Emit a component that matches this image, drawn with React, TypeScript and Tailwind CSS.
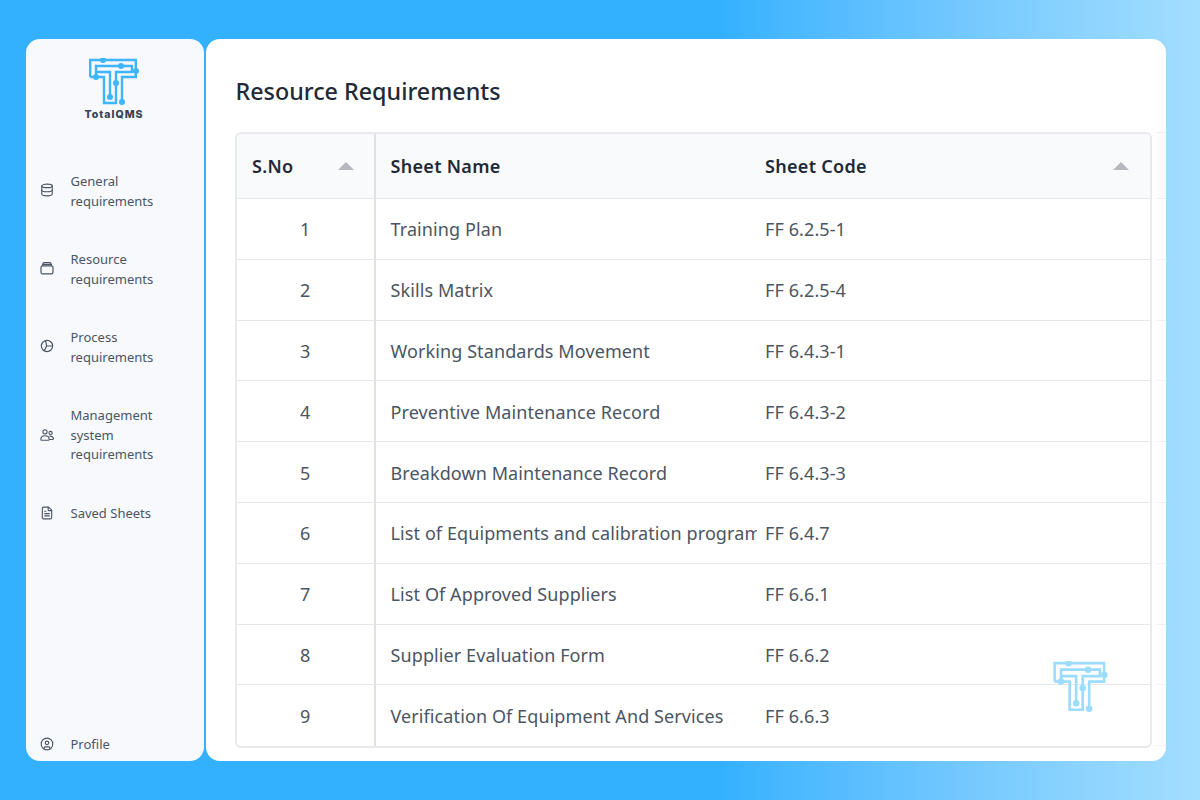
import { Database, FileText, CircleUser } from 'lucide-react';

const rows = [
  ['1', 'Training Plan', 'FF 6.2.5-1'],
  ['2', 'Skills Matrix', 'FF 6.2.5-4'],
  ['3', 'Working Standards Movement', 'FF 6.4.3-1'],
  ['4', 'Preventive Maintenance Record', 'FF 6.4.3-2'],
  ['5', 'Breakdown Maintenance Record', 'FF 6.4.3-3'],
  ['6', 'List of Equipments and calibration program', 'FF 6.4.7'],
  ['7', 'List Of Approved Suppliers', 'FF 6.6.1'],
  ['8', 'Supplier Evaluation Form', 'FF 6.6.2'],
  ['9', 'Verification Of Equipment And Services', 'FF 6.6.3'],
];

function Logo({ className }: { className: string }) {
  return (
    <svg viewBox="0 0 50 48" fill="none" stroke="currentColor" strokeWidth="2.4" className={className}>
      <path d="M1.2 19V2h45.6v17H33v26" />
      <path d="M1.2 19H15v26h12V26" />
      <path d="M7 19V8h36v6H27v12" />
      <path d="M21 38V14H7" />
      <g fill="currentColor" stroke="none">
        <circle cx="14" cy="2" r="3" />
        <circle cx="32" cy="8" r="3" />
        <circle cx="47" cy="13" r="3" />
        <circle cx="7" cy="19" r="3" />
        <circle cx="27" cy="25" r="3" />
        <circle cx="21" cy="39" r="3" />
        <circle cx="33" cy="44" r="3" />
      </g>
    </svg>
  );
}

function BoxIcon() {
  return (
    <svg viewBox="0 0 14 14" fill="none" stroke="currentColor" strokeWidth="1.2" className="h-[14px] w-[14px]">
      <rect x="1" y="4.8" width="12" height="8" rx="1.6" />
      <path d="M2.3 4.8 3 2.6C3.2 2 3.6 1.6 4.3 1.6h5.4c.7 0 1.1.4 1.3 1l.7 2.2" />
      <path d="M3 3.4h8" />
    </svg>
  );
}

function GaugeIcon() {
  return (
    <svg viewBox="0 0 14 14" fill="none" stroke="currentColor" strokeWidth="1.2" className="h-[14px] w-[14px]">
      <circle cx="7" cy="7" r="5.6" />
      <path d="M5.6 1.6 6.6 7l-2.4 4.8M6.6 7h6" />
    </svg>
  );
}

function PeopleIcon() {
  return (
    <svg viewBox="0 0 14 14" fill="none" stroke="currentColor" strokeWidth="1.1" className="h-[14px] w-[14px]">
      <circle cx="5" cy="3.8" r="2.1" />
      <circle cx="10.6" cy="5" r="1.6" />
      <path d="M.8 11.4c0-2.2 1.8-3.6 4.2-3.6s4.2 1.4 4.2 3.6c0 .5-.4.8-.9.8H1.7c-.5 0-.9-.3-.9-.8Z" />
      <path d="M9.4 8.2c2.2-.3 4 .8 4 2.5 0 .5-.4.8-.9.8H9.4" />
    </svg>
  );
}

const navItems = [
  { icon: <Database className="h-[14px] w-[14px]" strokeWidth={1.9} />, lines: ['General', 'requirements'], iconClass: 'mb-[3px]' },
  { icon: <BoxIcon />, lines: ['Resource', 'requirements'], iconClass: 'mb-[3px]' },
  { icon: <GaugeIcon />, lines: ['Process', 'requirements'], iconClass: 'mb-[3px]' },
  { icon: <PeopleIcon />, lines: ['Management', 'system', 'requirements'], iconClass: '' },
  { icon: <FileText className="h-[14px] w-[14px]" strokeWidth={1.9} />, lines: ['Saved Sheets'], iconClass: '' },
];

export default function App() {
  return (
    <div className="flex h-[800px] w-[1200px] gap-[2px] overflow-hidden bg-gradient-to-r from-[#33b1ff] from-[60%] to-[#a3deff] py-[39px] pl-[26px] pr-[34px] font-['Noto_Sans',sans-serif]">
      <aside className="flex w-[178px] flex-col rounded-[14px] bg-[#f7f9fd] pb-[7px] pt-[19px] text-[13px] leading-[19.5px] text-[#4b5563]">
        <div className="flex flex-col items-center pr-[2px]">
          <Logo className="h-[48px] w-[50px] text-[#3db5ff]" />
          <div className="mt-[2px] font-['Inter',sans-serif] text-[10.5px] font-extrabold leading-[14px] tracking-[1px] text-[#374151]">TotalQMS</div>
        </div>
        <nav className="mt-[50px] flex flex-col gap-[39px]">
          {navItems.map((item) => (
            <div key={item.lines[0]} className="flex items-center gap-[16.5px] pl-[14px]">
              <span className={item.iconClass}>{item.icon}</span>
              <div>
                {item.lines.map((line) => (
                  <div key={line}>{line}</div>
                ))}
              </div>
            </div>
          ))}
        </nav>
        <div className="mt-auto flex items-center gap-[16.5px] pl-[14px]">
          <CircleUser className="h-[14px] w-[14px]" strokeWidth={1.9} />
          <div>Profile</div>
        </div>
      </aside>

      <main className="relative flex-1 overflow-hidden rounded-[14px] bg-white pl-[29px] pt-[34px]">
        <h1 className="pl-[0.5px] text-[23.3px] font-medium leading-[36px] text-[#1f2937]">Resource Requirements</h1>
        <div className="mt-[23px] flex gap-[5px]">
          <div className="w-[917px] shrink-0 overflow-hidden rounded-[6px] border-2 border-[#e8eaed] text-[18px] tracking-[0.1px] text-[#4b5563]">
            <div className="flex h-[65px] items-center border-b-[1.5px] border-[#e5e7eb] bg-[#f9fafb] font-semibold tracking-[0.3px] text-[#1f2937]">
              <div className="flex h-full w-[138.5px] shrink-0 items-center justify-between border-r-2 border-[#dfe1e5] pl-[15px] pr-[20px]">
                <span>S.No</span>
                <span className="h-0 w-0 border-x-[8px] border-b-[8px] border-x-transparent border-b-[#b5b8bd]" />
              </div>
              <div className="w-[389.5px] shrink-0 pl-[15px]">Sheet Name</div>
              <div className="flex flex-1 items-center justify-between pr-[21px]">
                <span>Sheet Code</span>
                <span className="h-0 w-0 border-x-[8px] border-b-[8px] border-x-transparent border-b-[#b5b8bd]" />
              </div>
            </div>
            {rows.map((row) => (
              <div key={row[0]} className="flex h-[60.8px] items-stretch border-b-[1.5px] border-[#e5e7eb] last:border-b-0">
                <div className="flex w-[138.5px] shrink-0 items-center justify-center border-r-2 border-[#dfe1e5] pt-[2px]">{row[0]}</div>
                <div className="flex w-[381.5px] shrink-0 items-center overflow-hidden whitespace-nowrap pl-[15px] pt-[2px]">{row[1]}</div>
                <div className="flex items-center pl-[8px] pt-[2px]">{row[2]}</div>
              </div>
            ))}
          </div>
          <div className="flex-1 border-t border-[#eef0f3]">
            <div className="h-[66px] border-b border-[#eef0f3] bg-[#fcfcfd]" />
            {rows.map((row) => (
              <div key={row[0]} className="h-[60.8px] border-b border-[#f1f2f4]" />
            ))}
          </div>
        </div>
        <Logo className="absolute left-[847px] top-[622px] h-[52px] w-[55px] text-[#9bdcff]" />
      </main>
    </div>
  );
}
